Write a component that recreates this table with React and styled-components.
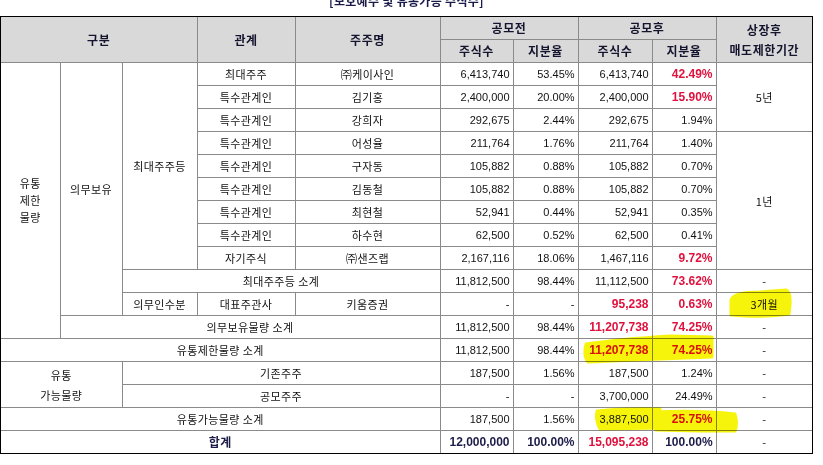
import React from "react";
import styled, { createGlobalStyle } from "styled-components";

const Global = createGlobalStyle`
  html, body { margin: 0; padding: 0; background: #fff; }
  body { font-family: "Liberation Sans", "Noto Sans CJK KR", sans-serif; }
`;

const Page = styled.div`
  position: relative;
  width: 823px;
  height: 465px;
  overflow: hidden;
`;

const Title = styled.div`
  width: 813px;
  margin-top: -6px;
  height: 14px;
  margin-bottom: 8px;
  text-align: center;
  font: bold 12px/14px "Noto Sans CJK KR", "Liberation Sans", sans-serif;
  letter-spacing: 0.3px;
  color: #1b1b4a;
`;

const Frame = styled.div`
  width: 811px;
  border: 1px solid #000;
`;

const Table = styled.table`
  width: 811px;
  table-layout: fixed;
  border-collapse: collapse;
  border-style: hidden;
`;

const HeadCell = styled.th`
  height: 22px;
  padding: 0;
  background: #d9d9d9;
  border: 1px solid #8a8a8a;
  font: bold 12px/20px "Noto Sans CJK KR", "Liberation Sans", sans-serif;
  letter-spacing: 0.6px;
  color: #14142e;
  text-align: center;
  vertical-align: middle;
`;

const toneColor = { red: "#e0113d", navy: "#1c1c4a", ink: "#111" };

const Cell = styled.td`
  height: 22px;
  padding: 0 ${(p) => (p.$align === "right" ? "3px" : "2px")} 0 2px;
  border: 1px solid #8a8a8a;
  text-align: ${(p) => p.$align || "center"};
  vertical-align: middle;
  white-space: nowrap;
  font-family: ${(p) =>
    p.$num ? `"Liberation Sans", sans-serif` : `"Noto Sans CJK KR", "Liberation Sans", sans-serif`};
  font-size: ${(p) => (p.$bold ? "12px" : "11px")};
  letter-spacing: ${(p) => (p.$num ? "0" : "0.4px")};
  font-weight: ${(p) => (p.$bold ? "bold" : "normal")};
  line-height: ${(p) => p.$lh || "20px"};
  color: ${(p) => toneColor[p.$tone || "ink"]};
`;

const Overlay = styled.svg`
  position: absolute;
  left: 0;
  top: 0;
  width: 823px;
  height: 465px;
  pointer-events: none;
  mix-blend-mode: multiply;
`;

const widths = [59, 62, 75, 98, 145, 73, 65, 74, 64, 96];

const Num = ({ v, tone, bold }) => (
  <Cell $num $align="right" $tone={tone} $bold={bold}>
    {v}
  </Cell>
);

const detail = [
  ["최대주주", "㈜케이사인", "6,413,740", "53.45%", "6,413,740", "42.49%", true],
  ["특수관계인", "김기홍", "2,400,000", "20.00%", "2,400,000", "15.90%", true],
  ["특수관계인", "강희자", "292,675", "2.44%", "292,675", "1.94%", false],
  ["특수관계인", "어성율", "211,764", "1.76%", "211,764", "1.40%", false],
  ["특수관계인", "구자동", "105,882", "0.88%", "105,882", "0.70%", false],
  ["특수관계인", "김동철", "105,882", "0.88%", "105,882", "0.70%", false],
  ["특수관계인", "최현철", "52,941", "0.44%", "52,941", "0.35%", false],
  ["특수관계인", "하수현", "62,500", "0.52%", "62,500", "0.41%", false],
  ["자기주식", "㈜샌즈랩", "2,167,116", "18.06%", "1,467,116", "9.72%", true],
];

export default function App() {
  return (
    <Page>
      <Global />
      <Title>[보호예수 및 유통가능 주식수]</Title>
      <Frame>
        <Table>
          <colgroup>
            {widths.map((w, i) => (
              <col key={i} style={{ width: w }} />
            ))}
          </colgroup>
          <thead>
            <tr>
              <HeadCell colSpan={3} rowSpan={2}>구분</HeadCell>
              <HeadCell rowSpan={2}>관계</HeadCell>
              <HeadCell rowSpan={2}>주주명</HeadCell>
              <HeadCell colSpan={2}>공모전</HeadCell>
              <HeadCell colSpan={2}>공모후</HeadCell>
              <HeadCell rowSpan={2}>
                상장후
                <br />
                매도제한기간
              </HeadCell>
            </tr>
            <tr>
              <HeadCell>주식수</HeadCell>
              <HeadCell>지분율</HeadCell>
              <HeadCell>주식수</HeadCell>
              <HeadCell>지분율</HeadCell>
            </tr>
          </thead>
          <tbody>
            {detail.map((r, i) => (
              <tr key={i}>
                {i === 0 && (
                  <>
                    <Cell rowSpan={12} $lh="17px">
                      유통
                      <br />
                      제한
                      <br />
                      물량
                    </Cell>
                    <Cell rowSpan={11}>의무보유</Cell>
                    <Cell rowSpan={9}>최대주주등</Cell>
                  </>
                )}
                <Cell>{r[0]}</Cell>
                <Cell>{r[1]}</Cell>
                <Num v={r[2]} />
                <Num v={r[3]} />
                <Num v={r[4]} />
                <Num v={r[5]} tone={r[6] ? "red" : undefined} bold={r[6]} />
                {i === 0 && <Cell rowSpan={3}>5년</Cell>}
                {i === 3 && <Cell rowSpan={6}>1년</Cell>}
              </tr>
            ))}
            <tr>
              <Cell colSpan={3}>최대주주등 소계</Cell>
              <Num v="11,812,500" />
              <Num v="98.44%" />
              <Num v="11,112,500" />
              <Num v="73.62%" tone="red" bold />
              <Cell>-</Cell>
            </tr>
            <tr>
              <Cell>의무인수분</Cell>
              <Cell>대표주관사</Cell>
              <Cell>키움증권</Cell>
              <Num v="-" />
              <Num v="-" />
              <Num v="95,238" tone="red" bold />
              <Num v="0.63%" tone="red" bold />
              <Cell>3개월</Cell>
            </tr>
            <tr>
              <Cell colSpan={4}>의무보유물량 소계</Cell>
              <Num v="11,812,500" />
              <Num v="98.44%" />
              <Num v="11,207,738" tone="red" bold />
              <Num v="74.25%" tone="red" bold />
              <Cell>-</Cell>
            </tr>
            <tr>
              <Cell colSpan={5}>유통제한물량 소계</Cell>
              <Num v="11,812,500" />
              <Num v="98.44%" />
              <Num v="11,207,738" tone="red" bold />
              <Num v="74.25%" tone="red" bold />
              <Cell>-</Cell>
            </tr>
            <tr>
              <Cell colSpan={2} rowSpan={2}>
                유통
                <br />
                가능물량
              </Cell>
              <Cell colSpan={3}>기존주주</Cell>
              <Num v="187,500" />
              <Num v="1.56%" />
              <Num v="187,500" />
              <Num v="1.24%" />
              <Cell>-</Cell>
            </tr>
            <tr>
              <Cell colSpan={3}>공모주주</Cell>
              <Num v="-" />
              <Num v="-" />
              <Num v="3,700,000" />
              <Num v="24.49%" />
              <Cell>-</Cell>
            </tr>
            <tr>
              <Cell colSpan={5}>유통가능물량 소계</Cell>
              <Num v="187,500" />
              <Num v="1.56%" />
              <Num v="3,887,500" />
              <Num v="25.75%" tone="red" bold />
              <Cell>-</Cell>
            </tr>
            <tr>
              <Cell colSpan={5} $bold $tone="navy">합계</Cell>
              <Num v="12,000,000" tone="navy" bold />
              <Num v="100.00%" tone="navy" bold />
              <Num v="15,095,238" tone="red" bold />
              <Num v="100.00%" tone="navy" bold />
              <Cell>-</Cell>
            </tr>
          </tbody>
        </Table>
      </Frame>
      <Overlay viewBox="0 0 823 465">
        <g fill="#f7f40c" stroke="#f7f40c" strokeLinejoin="round" strokeLinecap="round">
          <path d="M731 300 Q733 292 760 292 L786 290 Q791 292 790 305 L789 314 Q770 317 745 316 L731 315 Z" strokeWidth="3" />
          <path d="M586 344 Q620 339 670 336 L712 337 L712 357 L660 359 L588 362 Q583 356 586 344 Z" strokeWidth="3" />
          <path d="M597 411 Q625 408 660 409 L662 428 L600 429 Q595 420 597 411 Z" strokeWidth="3" />
          <path d="M655 412 Q700 410 735 414 Q738 424 735 431 L700 431 L656 430 Z" strokeWidth="3" />
        </g>
      </Overlay>
    </Page>
  );
}
